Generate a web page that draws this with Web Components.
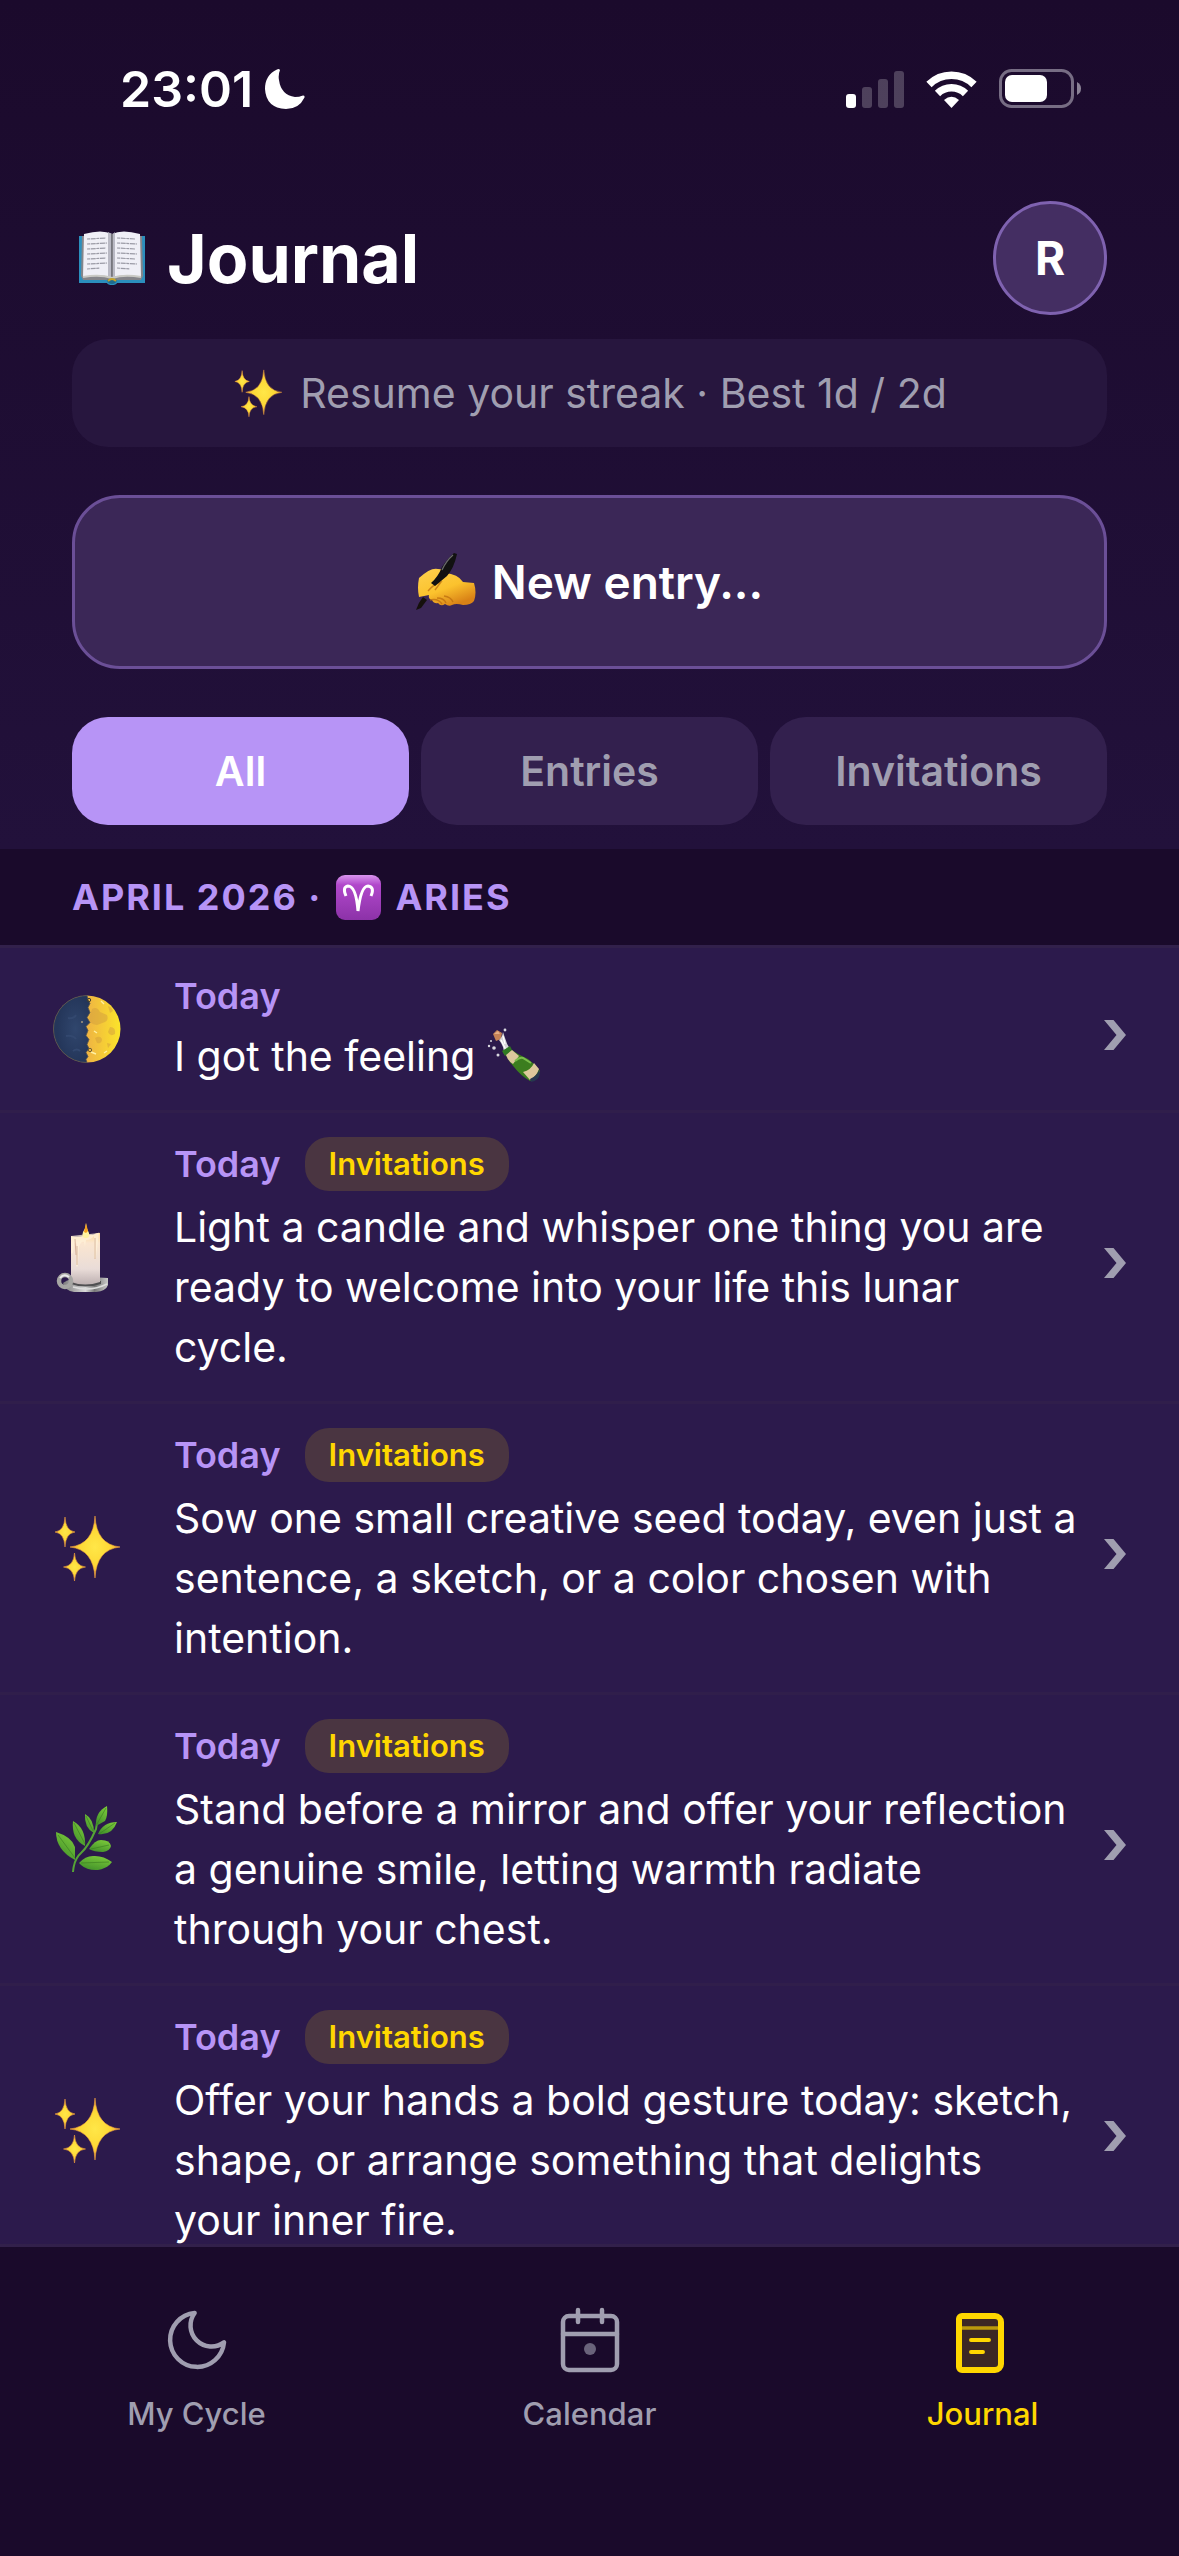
<!DOCTYPE html>
<html lang="en">
<head>
<meta charset="utf-8">
<meta name="viewport" content="width=device-width, initial-scale=1">
<title>Journal</title>
<style>
  :root {
    --night: #1a0a2b;
    --row: #2c1a4c;
    --line: #32204b;
    --row-line: #301e4b;
    --lilac: #b794f6;
    --muted: #a09eb0;
    --gold: #ffd700;
  }
  body {
    margin: 0;
    font-family: Inter, "Noto Sans", sans-serif;
    color: #fff;
    background: var(--night);
  }
  ul {
    list-style: none;
    margin: 0;
    padding: 0;
  }
</style>
</head>
<body>
<app-shell>
  <status-bar slot="top" time="23:01"></status-bar>
  <page-header slot="top" icon="book" initial="R">Journal</page-header>
  <streak-banner slot="top">Resume your streak · Best 1d / 2d</streak-banner>
  <new-entry-button slot="top">New entry...</new-entry-button>
  <filter-tabs slot="top" items="All,Entries,Invitations" selected="All"></filter-tabs>

  <month-heading sign="aries"><span>April 2026 ·</span><span slot="sign">Aries</span></month-heading>
  <ul>
    <li><entry-row icon="moon" date="Today">I got the feeling <emoji-icon name="bottle"></emoji-icon></entry-row></li>
    <li><entry-row icon="candle" date="Today" tag="Invitations">Light a candle and whisper one thing you are ready to welcome into your life this lunar cycle.</entry-row></li>
    <li><entry-row icon="sparkles" date="Today" tag="Invitations">Sow one small creative seed today, even just a sentence, a sketch, or a color chosen with intention.</entry-row></li>
    <li><entry-row icon="herb" date="Today" tag="Invitations">Stand before a mirror and offer your reflection a genuine smile, letting warmth radiate through your chest.</entry-row></li>
    <li><entry-row icon="sparkles" date="Today" tag="Invitations">Offer your hands a bold gesture today: sketch, shape, or arrange something that delights your inner fire.</entry-row></li>
  </ul>

  <tab-bar slot="bottom"></tab-bar>
</app-shell>

<script>
// Four-pointed star: centre, half width, half height
const star = (x, y, rx, ry) =>
  `<path d="M${x} ${y - ry}Q${x + rx * 0.06} ${y - ry * 0.08} ${x + rx} ${y}Q${x + rx * 0.06} ${y + ry * 0.08} ${x} ${y + ry}Q${x - rx * 0.06} ${y + ry * 0.08} ${x - rx} ${y}Q${x - rx * 0.06} ${y - ry * 0.08} ${x} ${y - ry}z" fill="url(#s)" stroke="#f0a03c" stroke-width=".6"/>`;

// Drawings used by <emoji-icon>: [viewBox, markup]
const EMOJI = {
  book: ['0 0 66 54', `
    <path d="M0 5h6v45H0zM60 5h6v45h-6zM0 48h66v4H38q-1 2-5 2t-5-2H0z" fill="#2b8fbd"/>
    <path d="M3 5h60l1 40-2 4H37q-4 3-8 0H4l-2-4z" fill="#85858a"/>
    <path d="M5 3q18-5 28 0v43q-12-3-29 0z" fill="#efeff6"/>
    <path d="M61 3Q43-2 33 3v43q12-3 29 0z" fill="#efeff6"/>
    <path d="M29 1l4 2v44l-4-2zM34 3l2-2v45l-2 1z" fill="#b9b9c4"/>
    <path d="M33 3v46" stroke="#66666d" stroke-width="1.6"/>
    <path d="M4 46q17-3 29 1 12-4 29-1" fill="none" stroke="#c9c9c4" stroke-width="2"/>
    <path d="M8 8l19-1M8 13l20-1M8 18l19-1M8 23l20-1M8 28l19-1M8 33l20-1M8 38l13-1M38 7l18 1M38 12l20 1M38 17l18 1M38 22l20 1M38 27l18 1M38 32l20 1M38 37l13 1" stroke="#9b9ba6" stroke-width="1.2" stroke-dasharray="3 .7 5 .6"/>
    <path d="M28 49q5-3 10 0-1 4-5 4t-5-4z" fill="#1f6c8e"/>
    <path d="M29 50q4-4 8 0" fill="none" stroke="#c6a52b" stroke-width="2"/>`],

  sparkles: ['0 0 72 72', `
    <defs><radialGradient id="s"><stop offset="0" stop-color="#ffe748"/><stop offset=".6" stop-color="#fdd835"/><stop offset="1" stop-color="#eda03a"/></radialGradient></defs>
    ${star(44, 35, 25, 31)}${star(14, 20, 10, 15)}${star(23.5, 55, 11, 14)}`],

  moon: ['0 0 72 72', `
    <defs>
      <linearGradient id="m"><stop offset=".5" stop-color="#efb443"/><stop offset="1" stop-color="#fbe42a"/></linearGradient>
      <radialGradient id="d" cx=".6"><stop offset="0" stop-color="#30466d"/><stop offset="1" stop-color="#24365a"/></radialGradient>
    </defs>
    <circle cx="36" cy="36" r="33.5" fill="url(#m)"/>
    <path d="M36 2.5a33.5 33.5 0 0 0 0 67l-1-3 2-3-2-4 3-4-2-4 2-5-3-4 2-5-2-4 4-4-3-5 3-5-2-5 2-4-2-4z" fill="url(#d)" stroke="#57544f" stroke-width=".8"/>
    <path d="M41 16q5-3 8 3l7 3q2 5-2 7l-8 3q-8-1-8-7zM57 13q4 1 5 5l-3 2zM59 34q6 0 5 7-5 3-7-2zM44 45q5-3 7 1 0 5-5 4zM56 50l4 1-3 4z" fill="#d19d3e" opacity=".5"/>
    <path d="M43 38l3 2M40 59l5 2M53 60l3-2M50 8l3 3" stroke="#fff0a0" stroke-width="1.4"/>
    <circle cx="31" cy="29" r="1" fill="#a9977c"/>
    <circle cx="38" cy="7" r="1.7" fill="none" stroke="#44402f"/>
    <circle cx="39" cy="57" r="1.7" fill="none" stroke="#6b5a34"/>
    <path d="M17 25q6 1 8-3M15 43q7-1 10 3M22 58q4-3 7 0" stroke="#33486f" stroke-width="2" fill="none"/>`],

  candle: ['0 0 72 72', `
    <defs>
      <linearGradient id="w" x2="0" y2="1"><stop offset="0" stop-color="#ffd996"/><stop offset=".2" stop-color="#fbe6d0"/><stop offset=".7" stop-color="#e9dcd8"/><stop offset="1" stop-color="#bdb0b1"/></linearGradient>
      <linearGradient id="h"><stop offset="0" stop-color="#7d7d7d"/><stop offset=".5" stop-color="#d9d9d9"/><stop offset=".7" stop-color="#777"/><stop offset="1" stop-color="#c9c9c9"/></linearGradient>
    </defs>
    <path d="M12 62q10-8 45-5v7q-2 6-12 7H23q-9-1-11-9z" fill="url(#h)"/>
    <path d="M20 60v3q14 5 30 0v-3z" fill="#505052"/>
    <path d="M20 15q7 2 12 0t10-1q5-3 7-2v49q-15 5-29 0z" fill="url(#w)"/>
    <path d="M20 15v16q0 3 2 1l1-9q2-4 3 2l-1 19q1 4 2 0l1-18q2-6 5-5l1 5 1-7q5 0 8-4v22q2 2 2-1l3-24" fill="#fff1da" opacity=".75"/>
    <path d="M24 18l1 16M26 25v19M44 17v21" stroke="#c99f85" fill="none" opacity=".7"/>
    <path d="M35 2q0 5 3 10 1 5-3 5-5 0-3-6 3-4 3-9z" fill="#fff3a1"/>
    <path d="M35 2l2 8-2 2-2-1z" fill="#f5a11c"/>
    <circle cx="14" cy="60" r="6" fill="none" stroke="#a6a6a3" stroke-width="4.5"/>
    <path d="M9 57q4-5 9-1" fill="none" stroke="#ececec" stroke-width="2"/>
    <path d="M22 66q18 5 34-3" fill="none" stroke="#ddd" stroke-width="1.5"/>`],

  herb: ['0 0 72 72', `
    <defs><linearGradient id="g" x1=".8" y1="0" x2=".3" y2="1"><stop offset="0" stop-color="#7ccb3a"/><stop offset="1" stop-color="#42912b"/></linearGradient></defs>
    <path d="M22 69q1-13 8-19t15-24l1-6" fill="none" stroke="#55a336" stroke-width="2"/>
    <g fill="url(#g)">
      <path d="M56 3q1 10-2 15l-9 5q-1-14 11-20z"/>
      <path d="M34 11q9 5 9 19-10-5-9-19z"/>
      <path d="M22 18q13 7 12 25-14-7-12-25z"/>
      <path d="M5 29q16 5 19 15v13Q5 47 5 29z"/>
      <path d="M66 19q-5 14-19 12 5-12 19-12z"/>
      <path d="M38 46q6-9 12-9 9 0 10 6-1 5-8 6-9 0-14-3z"/>
      <path d="M28 60q7-8 16-7 9 0 17 6-4 6-14 8-12 1-19-7z"/>
    </g>
    <path d="M55 5l-9 16M35 13l7 15M23 20l11 21M7 32l17 23M64 20L48 31M58 42l-18 4M58 59l-28 1" stroke="#37791f" stroke-width=".8" opacity=".7"/>`],

  bottle: ['0 0 54 54', `
    <path d="M6 6l4-4 5 3-1 6-5 2z" fill="#c48156"/><path d="M7 6l4-3 2 3z" fill="#e3ae85"/>
    <path d="M12 12q3-2 4-8l2 6q2 7 5 11l-6 5q0-8-5-14z" fill="#d6d5d8"/>
    <path d="M14 12l5 10M16 8l2 8" stroke="#fff" stroke-width="1.3"/>
    <g fill="#d8d8df"><circle cx="2" cy="18" r="1.2"/><circle cx="7" cy="20" r="1.8"/><circle cx="11" cy="27" r="1.5"/><circle cx="18" cy="2" r="1.4"/><circle cx="4" cy="13" r="1"/></g>
    <path d="M15 23l8-5 2 4-7 6z" fill="#2f7a22"/>
    <path d="M19 27l6-5 6 4 10 5q7 5 12 12-2 8-10 10-9-5-16-14-5-5-8-12z" fill="#3c7d1f"/>
    <path d="M19 27l6-5 7 6-6 8q-5-3-7-9z" fill="#dcc79d"/>
    <path d="M28 33q5-4 8-3l8 5" fill="none" stroke="#7bbd4c" stroke-width="2"/>
    <path d="M36 44q8-2 11-9l5 6q-3 8-9 11z" fill="#ddc99b"/>
    <path d="M43 51q7-3 9-9l1 3q-1 8-9 9z" fill="#26384f"/>`],

  hand: ['0 0 60 60', `
    <defs><linearGradient id="y" x2=".6" y2="1"><stop offset="0" stop-color="#ffd14f"/><stop offset=".6" stop-color="#fbc22d"/><stop offset="1" stop-color="#d98216"/></linearGradient></defs>
    <path d="M3 45q-2-9 0-19Q15 15 22 17q5 0 7 4 13 1 18 9l11 1q3 10 0 18-3 4-11 4-7-2-11 0-3 2-7-1-4 3-7-1-4 1-6-3-4-1-3-5z" fill="url(#y)"/>
    <path d="M12 39q7-8 13-9l-6 8M14 48q8-2 12 4M21 46q7 0 9 5M28 44q7 1 9 6" fill="none" stroke="#b9690d" stroke-width="1.4" opacity=".7"/>
    <path d="M38 1l3 1q-3 14-10 22L19 34l-4-3q7-6 11-16Q32 6 38 1z" fill="#111"/>
    <path d="M37 3q-7 6-11 15" fill="none" stroke="#69696c" stroke-width="1.3"/>
    <path d="M7 45l4 3-6 8-5 2q2-7 7-13z" fill="#15100c"/>`],

  aries: ['0 0 45 45', `
    <defs><linearGradient id="a" x2="0" y2="1"><stop offset="0" stop-color="#d995ee"/><stop offset=".22" stop-color="#b148cb"/><stop offset="1" stop-color="#8c32a8"/></linearGradient></defs>
    <rect width="45" height="45" rx="9" fill="url(#a)"/>
    <path d="M10 21Q6 12 12 11q8 0 10 25 3-25 10-25 7 1 3 10" fill="none" stroke="#fff" stroke-width="3"/>`]
};

class EmojiIcon extends HTMLElement {
  constructor() {
    super();
    this.attachShadow({ mode: 'open' });
  }

  connectedCallback() {
    const [box, art] = EMOJI[this.getAttribute('name')];
    const [, , w, h] = box.split(' ');
    this.shadowRoot.innerHTML = `
      <style>
        :host { display: inline-block; line-height: 0; flex: none; vertical-align: -11px; }
      </style>
      <svg width="${this.getAttribute('size') || w}" height="${this.getAttribute('size') || h}" viewBox="${box}" aria-hidden="true">${art}</svg>
    `;
  }
}
customElements.define('emoji-icon', EmojiIcon);

class AppShell extends HTMLElement {
  constructor() {
    super();
    this.attachShadow({ mode: 'open' }).innerHTML = `
      <style>
        :host {
          display: flex;
          flex-direction: column;
          height: 100vh;
        }
        header {
          background: linear-gradient(#1b0a2c, #22113b);
          padding-bottom: 24px;
        }
        main {
          flex: 1;
          min-height: 0;
          overflow-y: auto;
          scrollbar-width: none;
          background: var(--row);
        }
      </style>
      <header><slot name="top"></slot></header>
      <main><slot></slot></main>
      <slot name="bottom"></slot>
    `;
  }
}
customElements.define('app-shell', AppShell);

class StatusBar extends HTMLElement {
  constructor() {
    super();
    this.attachShadow({ mode: 'open' });
  }

  connectedCallback() {
    this.shadowRoot.innerHTML = `
      <style>
        :host {
          display: flex;
          align-items: center;
          justify-content: space-between;
          height: 177px;
          padding: 0 98px 0 120px;
        }
        div { display: flex; align-items: center; }
        .clock { gap: 12px; }
        .signals { gap: 22px; }
        time { font-size: 50px; line-height: 60px; font-weight: 600; }
      </style>
      <div class="clock">
        <time>${this.getAttribute('time')}</time>
        <svg width="40" height="40" viewBox="0 0 40 40" aria-hidden="true"><path d="M12 .5Q14-.5 15 1q-2 5-1 10 2 15 16 17 4 0 8-1.500 2 0 1.500 2Q34 40 21 40 1 39 0 20 0 6 12 .5z" fill="#fff"/></svg>
      </div>
      <div class="signals">
        <svg width="58" height="38" viewBox="0 0 58 38" fill="#fff" aria-hidden="true">
          <rect y="24" width="10" height="14" rx="3"/>
          <g opacity=".22"><rect x="16" y="17" width="10" height="21" rx="3"/><rect x="32" y="9" width="10" height="29" rx="3"/><rect x="48" y="1" width="10" height="37" rx="3"/></g>
        </svg>
        <svg width="51" height="38" viewBox="0 0 51 38" fill="none" stroke="#fff" stroke-width="7.5" aria-hidden="true">
          <path d="M3 14.500a32 32 0 0 1 45 0M11.500 23.500a20 20 0 0 1 28 0"/>
          <path d="M25.500 38l-7.500-8q7.500-6.500 15 0z" fill="#fff" stroke="none"/>
        </svg>
        <svg width="82" height="39" viewBox="0 0 82 39" aria-hidden="true">
          <rect x="1.5" y="1.5" width="72" height="36" rx="11" fill="none" stroke="#776d84" stroke-width="3"/>
          <rect x="6" y="6" width="42" height="27" rx="7" fill="#fff"/>
          <path d="M78 13q4 2 4 6.500T78 26z" fill="#8b8296"/>
        </svg>
      </div>
    `;
  }
}
customElements.define('status-bar', StatusBar);

class PageHeader extends HTMLElement {
  constructor() {
    super();
    this.attachShadow({ mode: 'open' });
  }

  connectedCallback() {
    this.shadowRoot.innerHTML = `
      <style>
        :host {
          display: flex;
          align-items: center;
          justify-content: space-between;
          padding: 24px 72px;
        }
        h1 {
          display: flex;
          align-items: center;
          gap: 22px;
          margin: 0;
          padding-left: 7px;
          font-size: 68px;
          line-height: 84px;
          font-weight: 700;
        }
        button {
          width: 114px;
          height: 114px;
          border: 3px solid #7f62b0;
          border-radius: 50%;
          background: #442e62;
          color: inherit;
          font: inherit;
          font-size: 46px;
          font-weight: 700;
        }
      </style>
      <h1><emoji-icon name="${this.getAttribute('icon')}"></emoji-icon><span><slot></slot></span></h1>
      <button type="button">${this.getAttribute('initial')}</button>
    `;
  }
}
customElements.define('page-header', PageHeader);

class StreakBanner extends HTMLElement {
  constructor() {
    super();
    this.attachShadow({ mode: 'open' }).innerHTML = `
      <style>
        :host {
          display: flex;
          align-items: center;
          justify-content: center;
          gap: 16px;
          height: 108px;
          margin: 0 72px 48px;
          border-radius: 36px;
          background: #27163e;
          color: var(--muted);
          font-size: 41px;
        }
      </style>
      <emoji-icon name="sparkles" size="52"></emoji-icon><span><slot></slot></span>
    `;
  }
}
customElements.define('streak-banner', StreakBanner);

class NewEntryButton extends HTMLElement {
  constructor() {
    super();
    this.attachShadow({ mode: 'open' }).innerHTML = `
      <style>
        :host { display: block; margin: 0 72px 48px; }
        button {
          display: flex;
          align-items: center;
          justify-content: center;
          gap: 16px;
          width: 100%;
          height: 174px;
          border: 3px solid #6b4f97;
          border-radius: 48px;
          background: #3b2757;
          color: inherit;
          font: inherit;
          font-size: 46px;
          font-weight: 600;
        }
      </style>
      <button type="button"><emoji-icon name="hand"></emoji-icon><span><slot></slot></span></button>
    `;
  }
}
customElements.define('new-entry-button', NewEntryButton);

class FilterTabs extends HTMLElement {
  constructor() {
    super();
    this.attachShadow({ mode: 'open' });
  }

  connectedCallback() {
    const selected = this.getAttribute('selected');
    const buttons = this.getAttribute('items').split(',').map((item) =>
      `<button type="button" aria-pressed="${item === selected}">${item}</button>`
    ).join('');

    this.shadowRoot.innerHTML = `
      <style>
        :host {
          display: grid;
          grid-auto-flow: column;
          grid-auto-columns: 1fr;
          gap: 12px;
          margin: 0 72px;
        }
        button {
          height: 108px;
          border: 0;
          border-radius: 36px;
          background: #33204e;
          color: var(--muted);
          font: inherit;
          font-size: 41px;
          font-weight: 600;
        }
        button[aria-pressed="true"] { background: var(--lilac); color: #fff; }
      </style>
      ${buttons}
    `;

    this.shadowRoot.addEventListener('click', (e) => {
      if (!e.target.matches('button')) return;
      this.shadowRoot.querySelectorAll('button').forEach((b) => {
        b.setAttribute('aria-pressed', b === e.target);
      });
    });
  }
}
customElements.define('filter-tabs', FilterTabs);

class MonthHeading extends HTMLElement {
  constructor() {
    super();
    this.attachShadow({ mode: 'open' });
  }

  connectedCallback() {
    this.shadowRoot.innerHTML = `
      <style>
        :host { display: block; background: var(--night); border-bottom: 3px solid var(--line); }
        h2 {
          display: flex;
          align-items: center;
          gap: 14px;
          height: 96px;
          margin: 0;
          padding: 0 72px;
          color: var(--lilac);
          font-size: 36px;
          font-weight: 700;
          letter-spacing: 2px;
          text-transform: uppercase;
        }
      </style>
      <h2><slot></slot><emoji-icon name="${this.getAttribute('sign')}"></emoji-icon><slot name="sign"></slot></h2>
    `;
  }
}
customElements.define('month-heading', MonthHeading);

class EntryRow extends HTMLElement {
  constructor() {
    super();
    this.attachShadow({ mode: 'open' });
  }

  connectedCallback() {
    const tag = this.getAttribute('tag');
    this.shadowRoot.innerHTML = `
      <style>
        :host { display: block; border-bottom: 3px solid var(--row-line); }
        a {
          display: grid;
          grid-template-columns: 78px 1fr 27px;
          align-items: center;
          padding: 24px 48px;
          color: inherit;
          text-decoration: none;
        }
        .body { padding: 0 27px 0 48px; }
        .meta {
          display: flex;
          align-items: center;
          gap: 24px;
          margin-bottom: 6px;
          color: var(--lilac);
          font-size: 36px;
          line-height: 48px;
          font-weight: 600;
        }
        .tag {
          padding: 0 24px;
          border-radius: 24px;
          background: #4a3541;
          color: var(--gold);
          font-size: 31px;
          line-height: 54px;
        }
        p { margin: 0; font-size: 41px; line-height: 60px; }
        emoji-icon { justify-self: center; }
      </style>
      <a href="#entry">
        <emoji-icon name="${this.getAttribute('icon')}"></emoji-icon>
        <div class="body">
          <div class="meta"><span>${this.getAttribute('date')}</span>${tag ? `<span class="tag">${tag}</span>` : ''}</div>
          <p><slot></slot></p>
        </div>
        <svg width="27" height="42" viewBox="0 0 27 42" aria-hidden="true"><path d="M0 12h9.500L22 27 9.500 42H0l12.500-15z" fill="#a09eb0"/></svg>
      </a>
    `;
  }
}
customElements.define('entry-row', EntryRow);

class TabBar extends HTMLElement {
  constructor() {
    super();
    this.attachShadow({ mode: 'open' }).innerHTML = `
      <style>
        :host { display: block; background: var(--night); border-top: 3px solid var(--line); }
        nav {
          display: grid;
          grid-template-columns: repeat(3, 1fr);
          padding: 57px 0 122px;
        }
        a {
          display: flex;
          flex-direction: column;
          align-items: center;
          gap: 18px;
          color: var(--muted);
          font-size: 31px;
          line-height: 40px;
          font-weight: 500;
          text-decoration: none;
        }
        a[aria-current] { color: var(--gold); }
        svg { fill: none; stroke: currentColor; stroke-width: 1.5; stroke-linecap: round; stroke-linejoin: round; }
      </style>
      <nav>
        <a href="#cycle">
          <svg width="72" height="72" viewBox="0 0 24 24" aria-hidden="true"><path d="M21 12.790A9 9 0 1 1 11.210 3 7 7 0 0 0 21 12.790z"/></svg>
          <span>My Cycle</span>
        </a>
        <a href="#calendar">
          <svg width="72" height="72" viewBox="0 0 24 24" aria-hidden="true">
            <rect x="3" y="4" width="18" height="18" rx="2"/><path d="M8 2v4M16 2v4M3 10h18"/>
            <circle cx="12" cy="15" r="2" fill="currentColor" stroke="none" opacity=".6"/>
          </svg>
          <span>Calendar</span>
        </a>
        <a href="#journal" aria-current="page">
          <svg width="72" height="72" viewBox="0 0 24 24" aria-hidden="true">
            <path d="M5 4h11a2 2 0 0 1 2 2v14a2 2 0 0 1-2 2H5a1 1 0 0 1-1-1V5a1 1 0 0 1 1-1z" fill="#ffd700" fill-opacity=".15" stroke-width="2"/>
            <path d="M5 8h12" stroke-width="1.2" stroke-linecap="butt" opacity=".65"/>
            <path d="M8 12h6M8 16h4" stroke-width="1.3"/>
          </svg>
          <span>Journal</span>
        </a>
      </nav>
    `;
  }
}
customElements.define('tab-bar', TabBar);
</script>
</body>
</html>
